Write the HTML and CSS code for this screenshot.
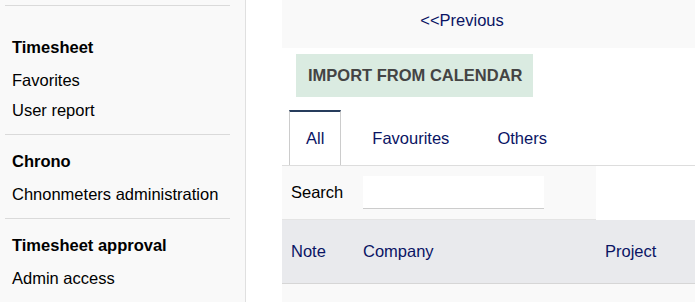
FILE: index.html
```html
<!DOCTYPE html>
<html>
<head>
<meta charset="utf-8">
<link rel="stylesheet" href="styles.css">
</head>
<body>
<div class="page">
  <aside class="sidebar">
    <div class="side-top"></div>
    <div class="side-section first">
      <div class="side-head">Timesheet</div>
      <div class="side-item">Favorites</div>
      <div class="side-item">User report</div>
    </div>
    <div class="side-section">
      <div class="side-head">Chrono</div>
      <div class="side-item">Chnonmeters administration</div>
    </div>
    <div class="side-section">
      <div class="side-head">Timesheet approval</div>
      <div class="side-item">Admin access</div>
    </div>
  </aside>
  <main class="main">
    <div class="navband">
      <a class="nav-prev">&lt;&lt;Previous</a>
    </div>
    <div class="actions">
      <span class="btn-action">IMPORT FROM CALENDAR</span>
    </div>
    <div class="tabs">
      <div class="tab active">All</div>
      <div class="tab">Favourites</div>
      <div class="tab">Others</div>
    </div>
    <div class="grid search-row">
      <div class="cell label">Search</div>
      <div class="cell"><input class="search-input" type="text"></div>
      <div class="cell empty"></div>
    </div>
    <div class="grid head-row">
      <div class="cell">Note</div>
      <div class="cell">Company</div>
      <div class="cell">Project</div>
    </div>
    <div class="body-row"></div>
  </main>
</div>
</body>
</html>
```
FILE: styles.css
```css
html, body {
  margin: 0;
  padding: 0;
  background: #fff;
  font-family: "Liberation Sans", Arial, sans-serif;
  font-size: 16.5px;
  color: #000;
}
.page {
  display: flex;
  height: 302px;
  overflow: hidden;
}
.sidebar {
  width: 245px;
  flex: none;
  background: #f9f9f9;
  border-right: 1px solid #e0e0e0;
  padding-top: 5px;
  box-sizing: content-box;
}
.side-top {
  margin: 0 15px 0 5px;
  border-top: 1px solid #dadada;
}
.side-section {
  margin: 0 15px 0 5px;
  padding: 16px 0 9px 7px;
  border-bottom: 1px solid #dadada;
}
.side-section.first {
  padding-top: 31px;
}
.side-head {
  font-weight: bold;
  line-height: 20px;
  margin-bottom: 8px;
}
.side-item {
  line-height: 30px;
  white-space: nowrap;
}
.main {
  flex: 1;
  min-width: 0;
  padding-left: 36px;
}
.navband {
  background: #f9f9f9;
  height: 48px;
  display: grid;
  grid-template-columns: 360px 1fr;
}
.nav-prev {
  grid-column: 1;
  text-align: center;
  color: #0a1464;
  line-height: 20px;
  padding-top: 10px;
}
.actions {
  padding: 6px 0 0 14px;
  display: flex;
}
.btn-action {
  display: inline-block;
  background: #daebe1;
  color: #444;
  font-weight: bold;
  height: 43px;
  line-height: 43px;
  padding: 0 11px 0 12px;
}
.tabs {
  display: flex;
  margin-top: 13px;
  padding-left: 7px;
  border-bottom: 1px solid #ddd;
}
.tab {
  color: #0a1464;
  border: 1px solid transparent;
  border-top: 2px solid transparent;
  border-bottom: none;
  padding: 16px 16px;
  line-height: 21px;
  margin-right: 14px;
}
.tab.active {
  border-color: #ccc;
  border-top-color: #263c5c;
}
.grid {
  display: grid;
  grid-template-columns: 72px 242px 1fr;
}
.search-row .cell {
  background: #f9f9f9;
  height: 53px;
  border-bottom: 1px solid #e4e4e4;
  display: flex;
  align-items: center;
}
.search-row .cell.empty {
  background: #fff;
  border-bottom: none;
}
.cell {
  padding-left: 9px;
}
.search-input {
  width: 181px;
  height: 33px;
  box-sizing: border-box;
  border: none;
  border-bottom: 1px solid #ccc;
  background: #fff;
  padding: 0;
  margin: 0;
  outline: none;
}
.head-row {
  background: #e9eaed;
  border-bottom: 1px solid #d6d6d6;
}
.head-row .cell {
  color: #0a1464;
  height: 63px;
  display: flex;
  align-items: center;
}
.body-row {
  background: #f9f9f9;
  height: 30px;
}
```
